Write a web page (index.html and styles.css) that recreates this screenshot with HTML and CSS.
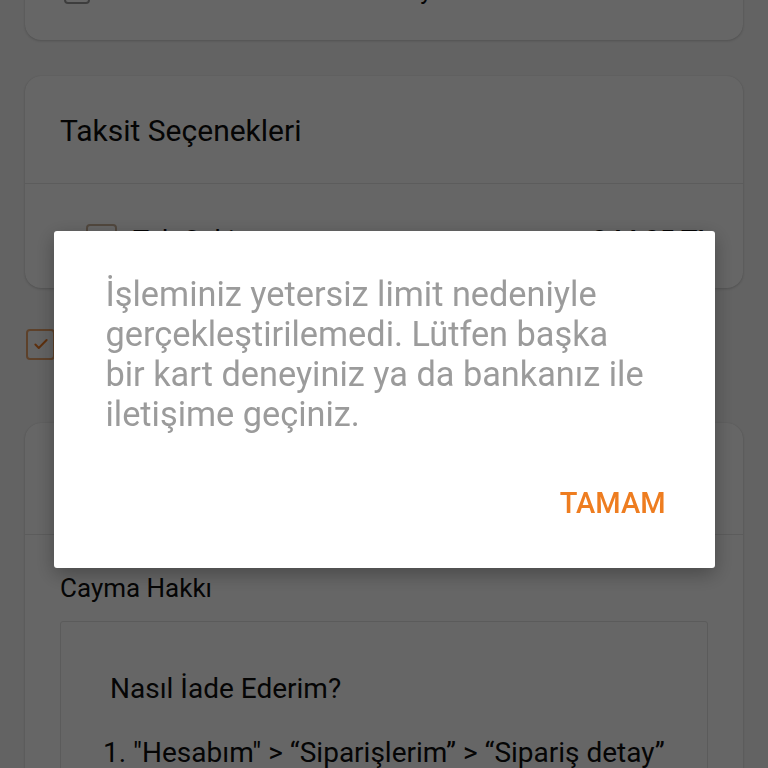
FILE: index.html
```html
<!DOCTYPE html>
<html lang="tr">
<head>
<meta charset="utf-8">
<title>Ödeme</title>
<link rel="stylesheet" href="styles.css">
</head>
<body>
<div class="page">
  <section class="card card-top">
    <div class="agree-row">
      <span class="box"></span>
      <span class="agree-text">Kartımı sonraki alımlarda kaydet</span>
    </div>
  </section>

  <section class="card card-taksit">
    <div class="card-head">Taksit Seçenekleri</div>
    <div class="taksit-row">
      <span class="box box-lg"></span>
      <span class="taksit-name">Tek Çekim</span>
      <span class="taksit-price">244,05 TL</span>
    </div>
  </section>

  <div class="consent">
    <span class="box box-checked">
      <svg viewBox="0 0 16 16" width="18" height="18"><path d="M3 8.5l3 3 7-7" fill="none" stroke="#e87722" stroke-width="1.8" stroke-linecap="round" stroke-linejoin="round"/></svg>
    </span>
    <span class="consent-text">Mesafeli Satış Sözleşmesi'ni okudum, onaylıyorum.</span>
  </div>

  <section class="card card-cayma">
    <div class="card-head">Sözleşmeler</div>
    <div class="cayma-body">
      <div class="cayma-title">Cayma Hakkı</div>
      <div class="cayma-box">
        <p class="iade-title">Nasıl İade Ederim?</p>
        <p class="iade-step">1. "Hesabım" &gt; “Siparişlerim” &gt; “Sipariş detay”</p>
        <p class="iade-step">sayfasından iade talebi oluşturun.</p>
      </div>
    </div>
  </section>
</div>

<div class="overlay">
  <div class="dialog" role="alertdialog">
    <p class="dialog-msg">İşleminiz yetersiz limit nedeniyle gerçekleştirilemedi. Lütfen başka bir kart deneyiniz ya da bankanız ile iletişime geçiniz.</p>
    <div class="dialog-actions">
      <button class="dialog-btn">TAMAM</button>
    </div>
  </div>
</div>
</body>
</html>
```

FILE: styles.css
```css
html, body {
  margin: 0;
  padding: 0;
  height: 100%;
  overflow: hidden;
}
body {
  background: #f8f8f8;
  font-family: Roboto, "Noto Sans", "Liberation Sans", sans-serif;
  color: #0d0d0d;
}
.page {
  margin-top: -60px;
  padding: 0 25px;
  display: flex;
  flex-direction: column;
}
.card {
  background: #fff;
  border-radius: 16px;
  box-shadow: 0 1px 3px rgba(0,0,0,0.18), 0 0 1px rgba(0,0,0,0.12);
}
.card-top {
  height: 100px;
  padding: 0 39px;
  display: flex;
  align-items: flex-start;
}
.agree-row {
  display: flex;
  align-items: center;
  gap: 20px;
  margin-top: 36px;
}
.box {
  width: 26px;
  height: 26px;
  border: 2px solid #9a9a9a;
  border-radius: 4px;
  box-sizing: border-box;
  flex: none;
  display: flex;
  align-items: center;
  justify-content: center;
}
.agree-text {
  font-size: 25px;
}
.card-taksit {
  margin-top: 36px;
  height: 212px;
}
.card-head {
  height: 108px;
  box-sizing: border-box;
  padding-left: 35px;
  display: flex;
  align-items: center;
  font-size: 30px;
  border-bottom: 1px solid #e6e6e6;
  padding-top: 2px;
}
.taksit-row {
  display: flex;
  align-items: center;
  padding: 37px 31px 0 61px;
  gap: 16px;
}
.box-lg {
  width: 31px;
  height: 31px;
  border-color: #c9b29a;
}
.taksit-name {
  font-size: 27px;
  padding-top: 4px;
}
.taksit-price {
  margin-left: auto;
  font-size: 27px;
  font-weight: 500;
  padding-top: 4px;
}
.consent {
  display: flex;
  align-items: center;
  gap: 16px;
  margin: 40px 0 0 1px;
  height: 32px;
}
.box-checked {
  width: 29px;
  height: 31px;
  border-color: #e8a26a;
}
.consent-text {
  font-size: 24px;
}
.card-cayma {
  margin-top: 63px;
  height: 420px;
}
.card-cayma .card-head {
  height: 112px;
}
.cayma-body {
  padding: 0 35px 0 35px;
}
.cayma-title {
  font-size: 26px;
  margin-top: 39px;
  line-height: 28px;
}
.cayma-box {
  margin-top: 19px;
  border: 1px solid #e3e3e3;
  border-radius: 3px;
  padding: 49px 30px 0 42px;
  height: 300px;
}
.iade-title {
  margin: 0 0 0 7px;
  font-size: 28px;
  line-height: 36px;
}
.iade-step {
  margin: 28px 0 0 0;
  font-size: 28px;
  line-height: 36px;
}
.iade-step + .iade-step {
  margin-top: 4px;
}
.overlay {
  position: fixed;
  inset: 0;
  background: rgba(0,0,0,0.6);
  display: flex;
  align-items: flex-start;
  justify-content: center;
}
.dialog {
  margin-top: 231px;
  width: 661px;
  height: 337px;
  box-sizing: border-box;
  background: #fff;
  border-radius: 3px;
  box-shadow: 0 6px 20px rgba(0,0,0,0.3);
  padding: 43px 49px 0 52px;
  display: flex;
  flex-direction: column;
}
.dialog-msg {
  margin: 0;
  font-size: 34.3px;
  line-height: 40px;
  color: #9b9b9b;
  width: 547px;
}
.dialog-actions {
  display: flex;
  justify-content: flex-end;
  margin-top: 50px;
}
.dialog-btn {
  background: none;
  border: none;
  padding: 0;
  font-family: Roboto, "Noto Sans", sans-serif;
  font-weight: 500;
  font-size: 29px;
  line-height: 38px;
  color: #ee7d20;
}
```
